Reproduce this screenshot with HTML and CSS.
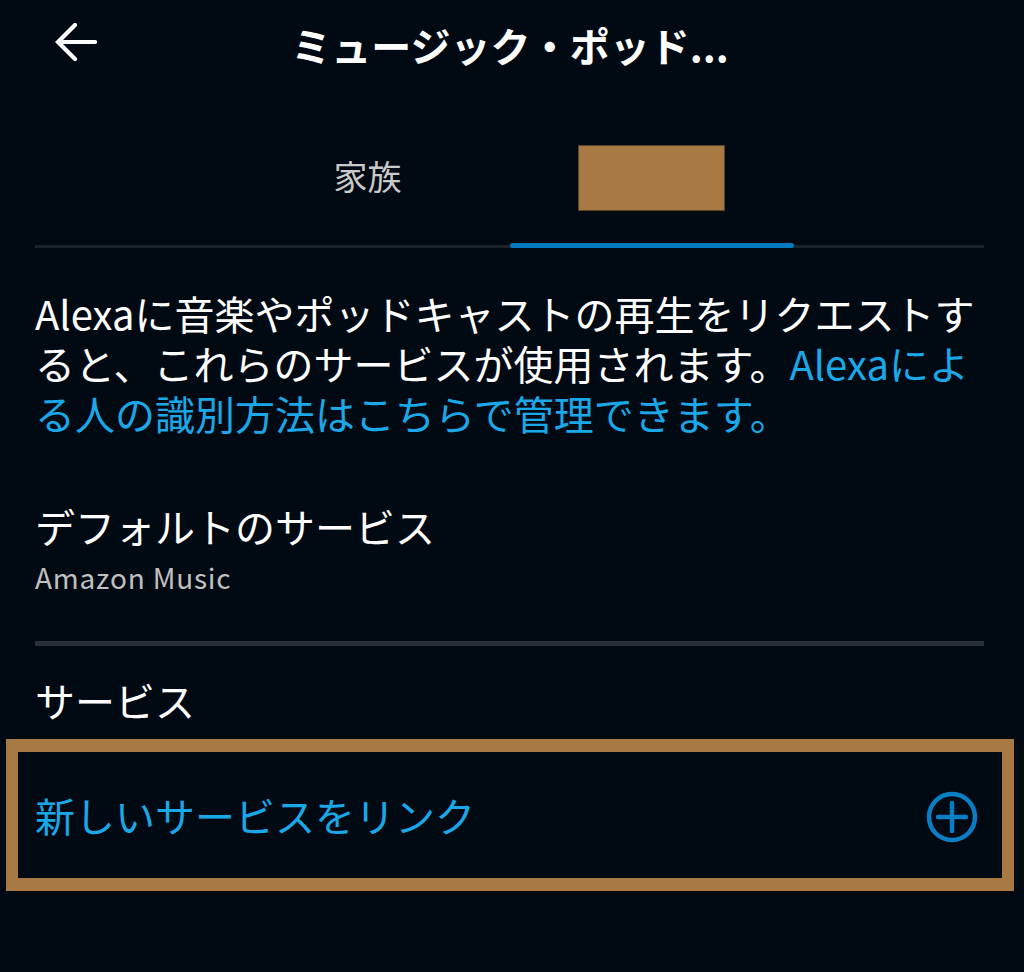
FILE: index.html
```html
<!DOCTYPE html>
<html lang="ja">
<head>
  <meta charset="UTF-8" />
  <title>ミュージック・ポッドキャスト</title>
  <link rel="stylesheet" href="styles.css">
</head>
<body>
  <header class="top-bar">
    <a class="back" href="#">
      <svg width="44" height="40" viewBox="0 0 44 40">
        <path d="M42 19H5M22 2L5 19l17 17" fill="none" stroke="#fff" stroke-width="4.2" stroke-linecap="round" stroke-linejoin="miter"/>
      </svg>
    </a>
    <h1 class="title">ミュージック・ポッド...</h1>
  </header>

  <div class="tabs">
    <div class="tab">家族</div>
    <div class="tab active"><span class="redact"></span></div>
  </div>

  <p class="intro">Alexaに音楽やポッドキャストの再生をリクエストすると、これらのサービスが使用されます。<a href="#">Alexaによる人の識別方法はこちらで管理できます。</a></p>

  <section class="default-service">
    <div class="label">デフォルトのサービス</div>
    <div class="sub">Amazon Music</div>
  </section>

  <div class="section-title">サービス</div>

  <a class="link-row" href="#">
    <span>新しいサービスをリンク</span>
    <svg width="52" height="52" viewBox="0 0 52 52">
      <circle cx="26" cy="26" r="23" fill="none" stroke="#0a7ec4" stroke-width="4.5"/>
      <path d="M26 12v28M12 26h28" stroke="#0a7ec4" stroke-width="4.5" stroke-linecap="round"/>
    </svg>
  </a>
</body>
</html>
```

FILE: styles.css
```css
html, body {
  margin: 0;
  padding: 0;
  background: #010a13;
  color: #fff;
  font-family: "Noto Sans CJK JP", "Noto Sans", sans-serif;
}

/* header */
.top-bar {
  height: 90px;
  display: flex;
  align-items: center;
  justify-content: center;
  position: relative;
}
.back {
  position: absolute;
  left: 53px;
  top: 23px;
  display: block;
  line-height: 0;
}
.title {
  margin: 0;
  font-size: 40px;
  font-weight: 700;
  line-height: 1;
  padding-right: 4px;
}

/* tabs */
.tabs {
  margin: 20px 40px 0 35px;
  display: flex;
  justify-content: center;
  border-bottom: 3px solid #1b222a;
}
.tab {
  width: 284px;
  height: 135px;
  display: flex;
  align-items: center;
  justify-content: center;
  font-size: 34px;
  color: #c9c9c9;
  position: relative;
  padding-bottom: 4px;
  box-sizing: border-box;
}
.tab.active::after {
  content: "";
  position: absolute;
  left: 0;
  right: 0;
  bottom: -3px;
  height: 5px;
  border-radius: 3px;
  background: #0779bf;
}
.redact {
  display: block;
  width: 145px;
  height: 64px;
  background: #a87a43;
  border: 1px solid #5c4426;
  margin-top: 4px;
}

/* intro text */
.intro {
  margin: 40px 40px 0 35px;
  font-size: 40px;
  line-height: 50px;
}
.intro a {
  color: #1aa8e8;
  text-decoration: none;
}

.default-service {
  margin: 63px 40px 0 35px;
  padding-bottom: 46px;
  border-bottom: 5px solid #2b3037;
}
.label {
  font-size: 40px;
  line-height: 50px;
}
.sub {
  font-size: 28px;
  line-height: 36px;
  margin-top: 8px;
  letter-spacing: 0.8px;
  color: #c0c0c0;
}

.section-title {
  margin: 29px 40px 0 35px;
  font-size: 40px;
  line-height: 50px;
}

.link-row {
  margin: 14px 10px 0 6px;
  height: 126px;
  border: 12px solid #a87a43;
  border-bottom-width: 13px;
  border-top-width: 13px;
  padding: 0 24px 0 17px;
  display: flex;
  align-items: center;
  justify-content: space-between;
  color: #1aa8e8;
  text-decoration: none;
  font-size: 40px;
}
.link-row svg {
  margin-top: 3px;
}
```
